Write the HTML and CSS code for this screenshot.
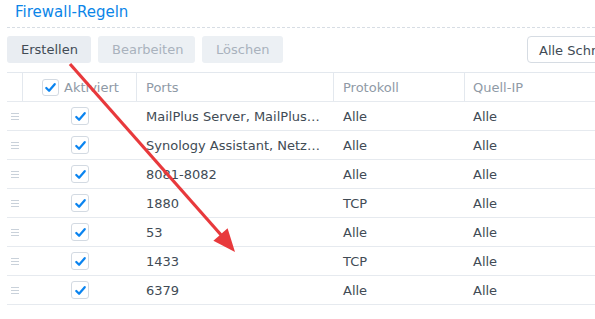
FILE: index.html
```html
<!DOCTYPE html>
<html lang="de">
<head>
<meta charset="utf-8">
<title>Firewall-Regeln</title>
<link rel="stylesheet" href="styles.css">
</head>
<body>
<div class="page">
  <div class="head"><h1 class="title">Firewall-Regeln</h1></div>
  <div class="toolbar">
    <button class="btn">Erstellen</button>
    <button class="btn disabled">Bearbeiten</button>
    <button class="btn disabled">Löschen</button>
    <div class="spacer"></div>
    <button class="btn select">Alle Schnittstellen</button>
  </div>
  <div class="table">
    <div class="row header">
      <div class="cell handle-col"></div>
      <div class="cell check-col head-check"><span class="cb"><svg viewBox="0 0 16 16"><polyline points="3.5,8.5 6.5,11.5 12.5,4.5"/></svg></span><span>Aktiviert</span></div>
      <div class="cell">Ports</div>
      <div class="cell">Protokoll</div>
      <div class="cell">Quell-IP</div>
    </div>
    <div class="row">
      <div class="cell handle-col"><span class="handle"></span></div>
      <div class="cell check-col"><span class="cb"><svg viewBox="0 0 16 16"><polyline points="3.5,8.5 6.5,11.5 12.5,4.5"/></svg></span></div>
      <div class="cell ports"><span class="ellip">MailPlus Server, MailPlus Web</span></div>
      <div class="cell">Alle</div>
      <div class="cell">Alle</div>
    </div>
    <div class="row">
      <div class="cell handle-col"><span class="handle"></span></div>
      <div class="cell check-col"><span class="cb"><svg viewBox="0 0 16 16"><polyline points="3.5,8.5 6.5,11.5 12.5,4.5"/></svg></span></div>
      <div class="cell ports"><span class="ellip">Synology Assistant, Netzwerk</span></div>
      <div class="cell">Alle</div>
      <div class="cell">Alle</div>
    </div>
    <div class="row">
      <div class="cell handle-col"><span class="handle"></span></div>
      <div class="cell check-col"><span class="cb"><svg viewBox="0 0 16 16"><polyline points="3.5,8.5 6.5,11.5 12.5,4.5"/></svg></span></div>
      <div class="cell ports">8081-8082</div>
      <div class="cell">Alle</div>
      <div class="cell">Alle</div>
    </div>
    <div class="row">
      <div class="cell handle-col"><span class="handle"></span></div>
      <div class="cell check-col"><span class="cb"><svg viewBox="0 0 16 16"><polyline points="3.5,8.5 6.5,11.5 12.5,4.5"/></svg></span></div>
      <div class="cell ports">1880</div>
      <div class="cell">TCP</div>
      <div class="cell">Alle</div>
    </div>
    <div class="row">
      <div class="cell handle-col"><span class="handle"></span></div>
      <div class="cell check-col"><span class="cb"><svg viewBox="0 0 16 16"><polyline points="3.5,8.5 6.5,11.5 12.5,4.5"/></svg></span></div>
      <div class="cell ports">53</div>
      <div class="cell">Alle</div>
      <div class="cell">Alle</div>
    </div>
    <div class="row">
      <div class="cell handle-col"><span class="handle"></span></div>
      <div class="cell check-col"><span class="cb"><svg viewBox="0 0 16 16"><polyline points="3.5,8.5 6.5,11.5 12.5,4.5"/></svg></span></div>
      <div class="cell ports">1433</div>
      <div class="cell">TCP</div>
      <div class="cell">Alle</div>
    </div>
    <div class="row">
      <div class="cell handle-col"><span class="handle"></span></div>
      <div class="cell check-col"><span class="cb"><svg viewBox="0 0 16 16"><polyline points="3.5,8.5 6.5,11.5 12.5,4.5"/></svg></span></div>
      <div class="cell ports">6379</div>
      <div class="cell">Alle</div>
      <div class="cell">Alle</div>
    </div>
  </div>
  <svg class="arrow" width="595" height="319" viewBox="0 0 595 319">
    <line x1="70" y1="64" x2="222" y2="236" />
    <polygon points="235,252 213.4,240.8 227.6,228.2" />
  </svg>
</div>
</body>
</html>
```

FILE: styles.css
```css
* { box-sizing: border-box; }
html, body { margin: 0; padding: 0; background: #fff; }
body {
  width: 595px;
  height: 319px;
  overflow: hidden;
  font-family: "DejaVu Sans", Verdana, sans-serif;
  font-size: 13px;
  color: #414b55;
}
.page { position: relative; width: 595px; height: 319px; overflow: hidden; }

.head {
  margin-left: 7px;
  height: 28px;
  border-bottom: 1px dashed #d7dde4;
}
.title {
  margin: 0;
  padding: 3px 0 0 8px;
  font-size: 15px;
  font-weight: normal;
  line-height: 18px;
  color: #0b85e8;
}

.toolbar {
  display: flex;
  align-items: center;
  gap: 7px;
  margin: 8px 0 0 7px;
  height: 27px;
  width: 680px;
}
.btn {
  height: 27px;
  border: none;
  border-radius: 3px;
  background: #e9edf2;
  font-family: inherit;
  font-size: 13px;
  color: #414b55;
  padding: 0 14px;
  line-height: 27px;
}
.btn.disabled { color: #a9b2bd; background: #ecf0f4; }
.btn:nth-child(1) { width: 84px; }
.btn:nth-child(2) { width: 97px; }
.btn:nth-child(3) { width: 81px; }
.spacer { width: 230px; flex: none; }
.btn.select {
  background: #fff;
  border: 1px solid #d6dce3;
  border-radius: 4px;
  padding: 0 11px;
  text-align: left;
  width: 160px;
  flex: none;
}

.table {
  margin: 9px 0 0 7px;
  border-top: 1px solid #e3e8ee;
  width: 600px;
}
.row {
  display: grid;
  grid-template-columns: 16px 114px 197px 131px 1fr;
  height: 29px;
  border-bottom: 1px solid #e6eaef;
}
.cell {
  display: flex;
  align-items: center;
  padding-left: 9px;
  white-space: nowrap;
  overflow: hidden;
}
.header .cell {
  color: #8f9aa6;
  border-right: 1px solid #e3e8ee;
}
.header .cell:last-child { border-right: none; padding-left: 8px; }
.row:not(.header) .cell:last-child { padding-left: 8px; }
.handle-col { padding-left: 4px; }
.check-col { justify-content: center; padding-left: 0; }
.header .head-check {
  justify-content: flex-start;
  padding-left: 19px;
  gap: 5px;
}
.handle {
  display: block;
  width: 8px;
  height: 7px;
  border-top: 1px solid #c9d1da;
  border-bottom: 1px solid #c9d1da;
  position: relative;
}
.handle::after {
  content: "";
  position: absolute;
  left: 0; right: 0;
  top: 2px;
  border-top: 1px solid #c9d1da;
}
.cb {
  display: inline-flex;
  width: 18px;
  height: 18px;
  border: 1px solid #d3dae2;
  border-radius: 3px;
  background: #fff;
  align-items: center;
  justify-content: center;
  flex: none;
}
.header .cb { width: 17px; height: 17px; }
.cb svg { width: 15px; height: 15px; }
.cb polyline {
  fill: none;
  stroke: #0a84f0;
  stroke-width: 2.4;
  stroke-linecap: round;
  stroke-linejoin: round;
}
.ports { padding-right: 13px; }
.ellip { overflow: hidden; text-overflow: ellipsis; display: block; }

.arrow {
  position: absolute;
  left: 0;
  top: 0;
  pointer-events: none;
}
.arrow line { stroke: #e8393c; stroke-width: 3.2; }
.arrow polygon { fill: #e8393c; }
```
